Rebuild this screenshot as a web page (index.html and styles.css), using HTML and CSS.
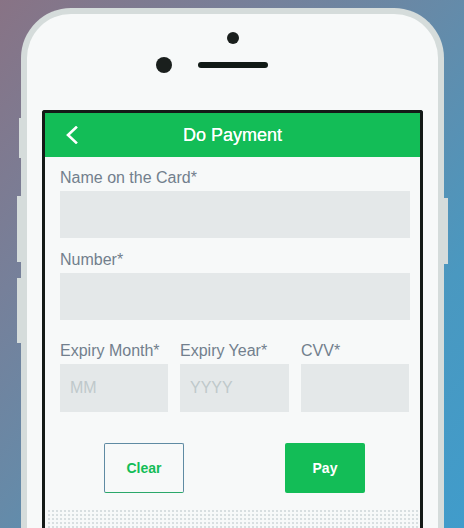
FILE: index.html
```html
<!DOCTYPE html>
<html lang="en">
<head>
<meta charset="utf-8">
<title>Do Payment</title>
<link rel="stylesheet" href="styles.css">
</head>
<body>
<div class="phone">
  <span class="side-btn side-l1"></span>
  <span class="side-btn side-l2"></span>
  <span class="side-btn side-l3"></span>
  <span class="side-btn side-r1"></span>
  <div class="phone-top">
    <span class="cam-small"></span>
    <div class="top-row">
      <span class="cam-big"></span>
      <span class="speaker"></span>
      <span class="spacer"></span>
    </div>
  </div>
  <div class="screen">
    <header class="app-bar">
      <div class="back">
        <svg width="14" height="18" viewBox="0 0 14 18"><polyline points="11,1.5 3,9 11,16.5" fill="none" stroke="#fff" stroke-width="2.6" stroke-linecap="square"/></svg>
      </div>
      <h1 class="title">Do Payment</h1>
      <div></div>
    </header>
    <form class="form">
      <label class="label">Name on the Card*</label>
      <input class="field" type="text">
      <label class="label label-gap">Number*</label>
      <input class="field" type="text">
      <div class="row3">
        <div class="col">
          <label class="label">Expiry Month*</label>
          <input class="field" type="text" placeholder="MM">
        </div>
        <div class="col">
          <label class="label">Expiry Year*</label>
          <input class="field" type="text" placeholder="YYYY">
        </div>
        <div class="col">
          <label class="label">CVV*</label>
          <input class="field" type="text">
        </div>
      </div>
      <div class="actions">
        <button type="button" class="btn btn-clear">Clear</button>
        <button type="button" class="btn btn-pay">Pay</button>
      </div>
    </form>
    <div class="dots"></div>
  </div>
</div>
</body>
</html>
```

FILE: styles.css
```css
html, body {
  margin: 0;
  padding: 0;
}
body {
  width: 464px;
  height: 528px;
  overflow: hidden;
  background: linear-gradient(to bottom right, #887385 0%, #76809a 28%, #668aa8 48%, #4a98c0 75%, #409ccb 100%);
  font-family: "Liberation Sans", Arial, sans-serif;
}
.phone {
  position: relative;
  box-sizing: border-box;
  margin: 8px 0 0 21px;
  width: 423px;
  height: 620px;
  border: 6px solid #d5dcdb;
  border-bottom: none;
  border-radius: 50px 50px 0 0;
  background: #f7f9f9;
}
.side-btn {
  position: absolute;
  background: #d5dcdb;
  width: 4px;
}
.side-l1 { left: -8px; top: 104px; height: 40px; width: 2px; }
.side-l2 { left: -10px; top: 182px; height: 66px; }
.side-l3 { left: -10px; top: 264px; height: 65px; }
.side-r1 { right: -10px; top: 184px; height: 66px; }

.phone-top {
  height: 96px;
  display: flex;
  flex-direction: column;
  align-items: center;
}
.cam-small {
  margin-top: 18px;
  width: 12px;
  height: 12px;
  border-radius: 50%;
  background: #1a1f1d;
}
.top-row {
  margin-top: 13px;
  display: flex;
  align-items: center;
  gap: 26px;
}
.cam-big {
  width: 16px;
  height: 16px;
  border-radius: 50%;
  background: #1a1f1d;
}
.speaker {
  width: 70px;
  height: 6px;
  border-radius: 3px;
  background: #111a16;
}
.spacer { width: 16px; }

.screen {
  margin: 0 15px;
  height: 500px;
  border: 3px solid #141a17;
  border-bottom: none;
  border-radius: 3px 3px 0 0;
  background: #f7f9f9;
}
.app-bar {
  height: 44px;
  background: #13bd57;
  display: grid;
  grid-template-columns: 1fr auto 1fr;
  align-items: center;
}
.back {
  padding-left: 20px;
  display: flex;
  align-items: center;
}
.back svg { display: block; }
.title {
  margin: 0;
  color: #fff;
  font-size: 18px;
  font-weight: normal;
  line-height: 20px;
  text-shadow: 0 0 0.4px #fff;
}
.form {
  padding: 12px 10px 0 15px;
  display: flex;
  flex-direction: column;
}
.label {
  display: block;
  font-size: 16px;
  line-height: 18px;
  color: #727f8d;
  margin-bottom: 4px;
}
.label-gap { margin-top: 13px; }
.field {
  box-sizing: border-box;
  width: 350px;
  height: 47px;
  border: none;
  outline: none;
  margin: 0;
  padding: 0 10px;
  background: #e4e8e9;
  font-family: "Liberation Sans", Arial, sans-serif;
  font-size: 16px;
  color: #333;
}
.field::placeholder {
  color: #bfc8cb;
}
.row3 {
  margin-top: 22px;
  display: grid;
  grid-template-columns: 108px 109px 108px;
  gap: 12px;
}
.row3 .field { width: 100%; height: 48px; }
.actions {
  margin-top: 31px;
  display: flex;
  padding-left: 44px;
  gap: 101px;
}
.btn {
  box-sizing: border-box;
  width: 80px;
  height: 50px;
  border-radius: 2px;
  font-family: "Liberation Sans", Arial, sans-serif;
  font-size: 14px;
  font-weight: bold;
  cursor: pointer;
}
.btn-clear {
  background: #f7f9f9;
  color: #13bd57;
  border: 1px solid #5f8ba3;
  border-bottom-color: #2aa86a;
}
.btn-pay {
  background: #13bd57;
  color: #fff;
  border: none;
}
.dots {
  margin: 16px 2px 0;
  height: 40px;
  background-color: #f7f9f9;
  background-image: radial-gradient(circle, #d7dee0 0.7px, transparent 1px);
  background-size: 4px 4px;
}
```
